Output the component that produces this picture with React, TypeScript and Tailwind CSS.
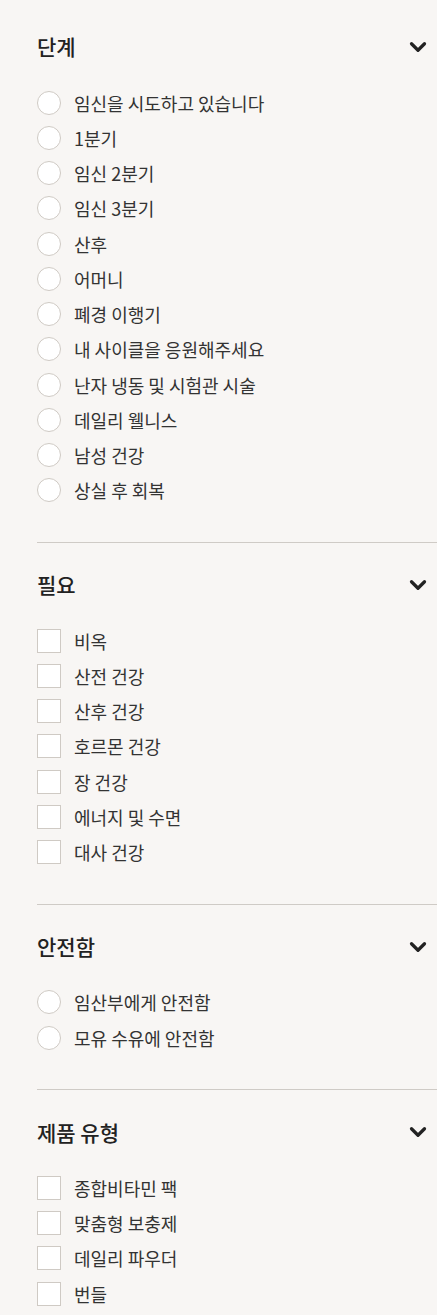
import { ChevronDown } from 'lucide-react'

interface FilterGroup {
  title: string
  type: 'radio' | 'checkbox'
  options: string[]
}

const GROUPS: FilterGroup[] = [
  {
    title: '단계',
    type: 'radio',
    options: [
      '임신을 시도하고 있습니다',
      '1분기',
      '임신 2분기',
      '임신 3분기',
      '산후',
      '어머니',
      '폐경 이행기',
      '내 사이클을 응원해주세요',
      '난자 냉동 및 시험관 시술',
      '데일리 웰니스',
      '남성 건강',
      '상실 후 회복',
    ],
  },
  {
    title: '필요',
    type: 'checkbox',
    options: ['비옥', '산전 건강', '산후 건강', '호르몬 건강', '장 건강', '에너지 및 수면', '대사 건강'],
  },
  {
    title: '안전함',
    type: 'radio',
    options: ['임산부에게 안전함', '모유 수유에 안전함'],
  },
  {
    title: '제품 유형',
    type: 'checkbox',
    options: ['종합비타민 팩', '맞춤형 보충제', '데일리 파우더', '번들'],
  },
]

export default function App() {
  return (
    <div
      className="min-h-[1315px] bg-[#f8f6f4] pl-[37px] pt-[5px] text-[#333]"
      style={{ fontFamily: '"Noto Sans CJK KR", "Noto Sans", sans-serif' }}
    >
      {GROUPS.map((group, i) => (
        <section key={group.title} className={i > 0 ? 'border-t border-[#cfcbc6]' : ''}>
          <div className="mt-[28px] flex h-[28px] items-center justify-between pr-[6px]">
            <h2 className="text-[21px] font-medium text-[#222]">{group.title}</h2>
            <ChevronDown className="h-[26px] w-[26px] text-[#222]" strokeWidth={3} />
          </div>
          <ul className="mt-[24px] pb-[34px]">
            {group.options.map((opt) => (
              <li key={opt} className="flex h-[35.25px] items-center">
                <span
                  className={`h-[24px] w-[24px] shrink-0 border border-[#cfcac4] bg-white ${
                    group.type === 'radio' ? 'rounded-full' : ''
                  }`}
                />
                <span className="ml-[13px] text-[18px] leading-none">{opt}</span>
              </li>
            ))}
          </ul>
        </section>
      ))}
    </div>
  )
}
